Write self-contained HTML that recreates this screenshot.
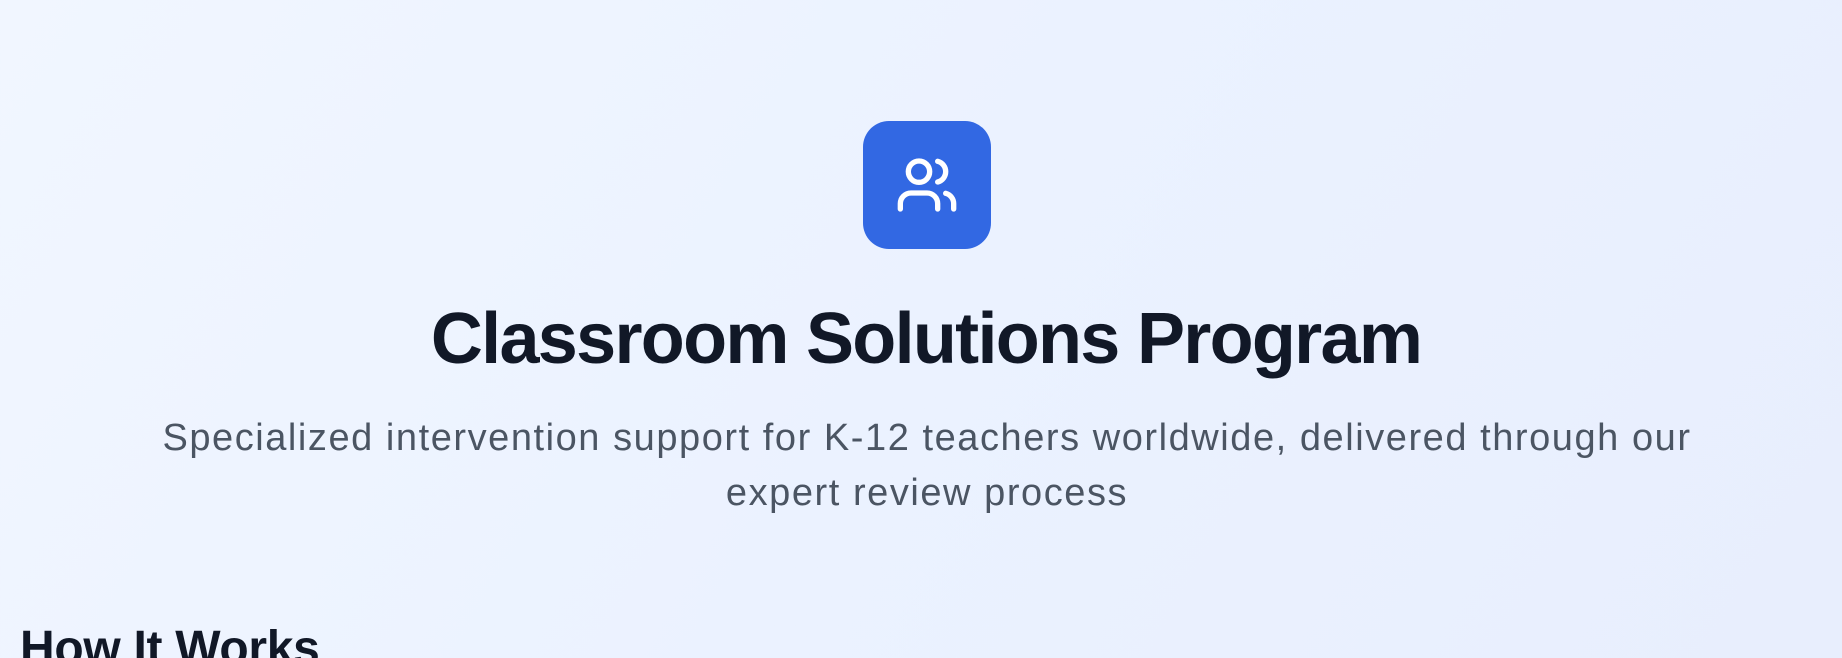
<!DOCTYPE html>
<html><head><meta charset="utf-8"><style>
html,body{margin:0;padding:0;width:1842px;height:658px;overflow:hidden}
body{background:linear-gradient(120deg,#f1f6ff 0%,#ebf2ff 50%,#e8eefd 100%);font-family:"Liberation Sans",sans-serif;position:relative}
.box{position:absolute;left:863px;top:121px;width:128px;height:128px;border-radius:26px;background:#3268e3}
.box svg{position:absolute;left:32px;top:32px}
h1{position:absolute;left:0;width:1852px;top:303px;margin:0;text-align:center;font-size:72px;line-height:72px;font-weight:700;color:#111827;letter-spacing:-1.7px}
p{position:absolute;left:137px;width:1580px;top:411px;margin:0;text-align:center;font-size:38px;line-height:55px;color:#4b5563;letter-spacing:1.55px}
h2{position:absolute;left:20px;top:625px;margin:0;font-size:48px;line-height:48px;font-weight:700;color:#111827;letter-spacing:-0.3px}
</style></head><body>
<div class="box"><svg width="64" height="64" viewBox="0 0 24 24" fill="none" stroke="#fff" stroke-width="2" stroke-linecap="round" stroke-linejoin="round"><path d="M16 21v-2a4 4 0 0 0-4-4H6a4 4 0 0 0-4 4v2"/><circle cx="9" cy="7" r="4"/><path d="M22 21v-2a4 4 0 0 0-3-3.87"/><path d="M16 3.13a4 4 0 0 1 0 7.75"/></svg></div>
<h1>Classroom Solutions Program</h1>
<p>Specialized intervention support for K-12 teachers worldwide, delivered through our expert review process</p>
<h2>How It Works</h2>
</body></html>
